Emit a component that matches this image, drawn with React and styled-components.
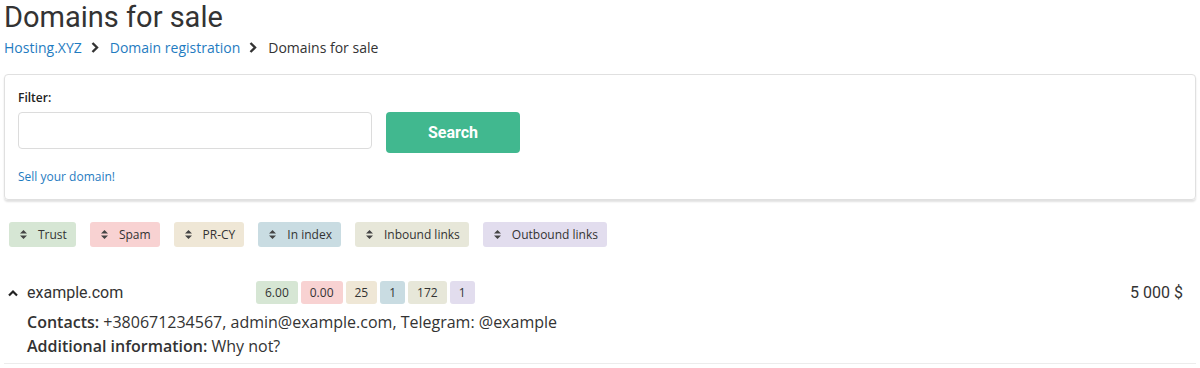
import React from 'react';
import styled, { createGlobalStyle } from 'styled-components';

const GlobalStyle = createGlobalStyle`
  body {
    margin: 0;
    background: #fff;
    font-family: 'Open Sans', sans-serif;
    color: #333;
  }
`;

// ------------------- Palette -------------------
const tones = {
  trust: '#d6e6d4',
  spam: '#f8d2d2',
  prcy: '#efe7d6',
  index: '#c9dce2',
  inbound: '#e7e7d9',
  outbound: '#e2ddee',
};

// ------------------- Styled Components -------------------
const Page = styled.div`
  padding: 0 4px;
`;

const Title = styled.h1`
  margin: 0;
  font-family: 'Roboto', sans-serif;
  font-weight: 400;
  font-size: 29px;
  line-height: 34px;
  color: #333;
`;

const Crumbs = styled.nav`
  display: flex;
  align-items: center;
  gap: 8px;
  height: 26px;
  font-size: 14px;
  color: #333;
`;

const CrumbLink = styled.a`
  color: #1f7cc1;
  text-decoration: none;
`;

const Chevron = styled.svg`
  width: 8px;
  height: 11px;
  margin: 0 3px 0 1px;
`;

const FilterCard = styled.section`
  margin-top: 14px;
  border: 1px solid #e0e0e0;
  border-radius: 4px;
  box-shadow: 0 2px 2px rgba(0, 0, 0, 0.12);
  padding: 14px 13px 14px;
`;

const Label = styled.div`
  font-size: 12px;
  font-weight: 600;
  color: #222;
  height: 17px;
`;

const FilterRow = styled.div`
  display: flex;
  align-items: flex-start;
  gap: 14px;
  margin-top: 6px;
`;

const Input = styled.input`
  box-sizing: border-box;
  width: 354px;
  height: 37px;
  border: 1px solid #dcdcdc;
  border-radius: 4px;
  outline: none;
`;

const SearchButton = styled.button`
  width: 134px;
  height: 41px;
  border: 0;
  border-radius: 4px;
  background: #41b88f;
  color: #fff;
  font-family: 'Roboto', sans-serif;
  font-weight: 700;
  font-size: 16px;
`;

const SellLink = styled.a`
  display: block;
  margin-top: 15px;
  font-size: 12px;
  color: #1f7cc1;
  text-decoration: none;
`;

const SortBar = styled.div`
  display: flex;
  gap: 14px;
  margin-top: 22px;
  padding-left: 5px;
`;

const SortTag = styled.button`
  display: flex;
  align-items: center;
  gap: 11px;
  height: 25px;
  padding: 0 9px 0 11px;
  border: 0;
  border-radius: 3px;
  background: ${(p) => p.$tone};
  font-family: 'Open Sans', sans-serif;
  font-size: 12px;
  color: #333;
`;

const DomainItem = styled.div`
  margin-top: 34px;
  padding-bottom: 5px;
  border-bottom: 1px solid #ececec;
`;

const DomainHead = styled.div`
  display: flex;
  align-items: center;
  height: 23px;
`;

const Toggle = styled.svg`
  width: 10px;
  height: 8px;
  margin: 0 9px 0 4px;
`;

const DomainName = styled.span`
  width: 229px;
  font-family: 'Roboto', sans-serif;
  font-size: 16px;
  color: #333;
`;

const Metrics = styled.div`
  display: flex;
  gap: 3px;
`;

const Metric = styled.span`
  height: 23px;
  line-height: 23px;
  padding: 0 9px;
  border-radius: 3px;
  background: ${(p) => p.$tone};
  font-size: 12px;
  color: #333;
  text-align: center;
`;

const Price = styled.span`
  margin-left: auto;
  margin-right: 13px;
  font-family: 'Roboto', sans-serif;
  font-size: 16px;
  color: #333;
`;

const Details = styled.div`
  padding-left: 23px;
  margin-top: 6px;
  font-size: 16px;
  line-height: 24px;
  color: #333;
`;

const Key = styled.b`
  font-weight: 600;
`;

const Updown = () => (
  <svg width="7" height="9" viewBox="0 0 7 9">
    <path d="M3.5 0 L7 3.5 H0 Z M3.5 9 L7 5.5 H0 Z" fill="#444" />
  </svg>
);

const Arrow = () => (
  <Chevron viewBox="0 0 8 11">
    <path d="M1.5 1 L6 5.5 L1.5 10" stroke="#333" strokeWidth="2.4" fill="none" />
  </Chevron>
);

const sorts = [
  ['Trust', tones.trust],
  ['Spam', tones.spam],
  ['PR-CY', tones.prcy],
  ['In index', tones.index],
  ['Inbound links', tones.inbound],
  ['Outbound links', tones.outbound],
];

const metrics = [
  ['6.00', tones.trust],
  ['0.00', tones.spam],
  ['25', tones.prcy],
  ['1', tones.index],
  ['172', tones.inbound],
  ['1', tones.outbound],
];

export default function App() {
  return (
    <Page>
      <GlobalStyle />
      <Title>Domains for sale</Title>
      <Crumbs>
        <CrumbLink href="#">Hosting.XYZ</CrumbLink>
        <Arrow />
        <CrumbLink href="#">Domain registration</CrumbLink>
        <Arrow />
        <span>Domains for sale</span>
      </Crumbs>

      <FilterCard>
        <Label>Filter:</Label>
        <FilterRow>
          <Input />
          <SearchButton>Search</SearchButton>
        </FilterRow>
        <SellLink href="#">Sell your domain!</SellLink>
      </FilterCard>

      <SortBar>
        {sorts.map(([name, tone]) => (
          <SortTag key={name} $tone={tone}>
            <Updown />
            {name}
          </SortTag>
        ))}
      </SortBar>

      <DomainItem>
        <DomainHead>
          <Toggle viewBox="0 0 10 8">
            <path d="M1 6.5 L5 2.5 L9 6.5" stroke="#222" strokeWidth="2.2" fill="none" />
          </Toggle>
          <DomainName>example.com</DomainName>
          <Metrics>
            {metrics.map(([v, tone], i) => (
              <Metric key={i} $tone={tone}>{v}</Metric>
            ))}
          </Metrics>
          <Price>5 000 $</Price>
        </DomainHead>
        <Details>
          <div><Key>Contacts:</Key> +380671234567, admin@example.com, Telegram: @example</div>
          <div><Key>Additional information:</Key> Why not?</div>
        </Details>
      </DomainItem>
    </Page>
  );
}
